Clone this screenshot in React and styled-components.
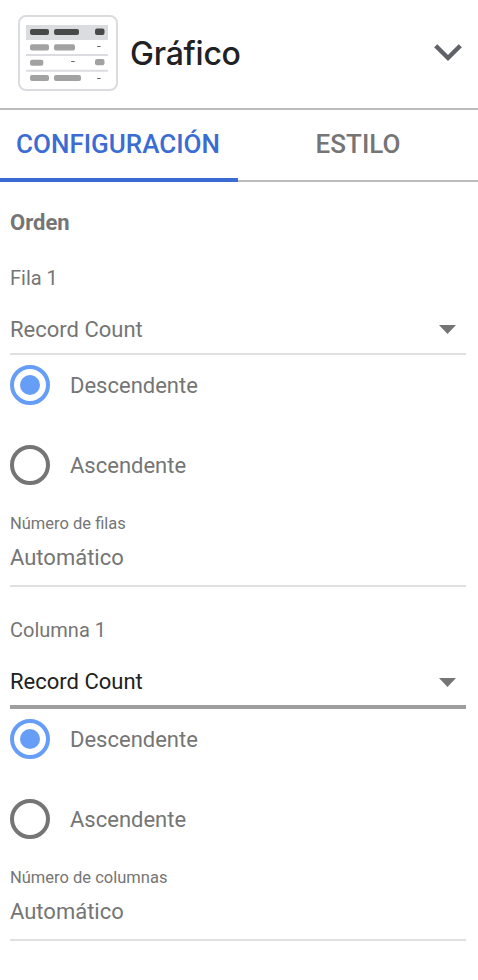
import React from "react";
import styled, { createGlobalStyle } from "styled-components";

const GlobalStyle = createGlobalStyle`
  * { box-sizing: border-box; }
  body { margin: 0; background: #fff; font-family: Roboto, sans-serif; color: #757575; }
`;
const Panel = styled.main`width: 478px; height: 980px; overflow: hidden; background: #fff;`;
const Header = styled.header`
  height: 110px; display: flex; align-items: flex-start; padding: 15px 16px 0 18px;
  border-bottom: 2px solid #bdbdbd;
`;
const Title = styled.h1`
  margin: 18px 0 0 12px; flex: 1; font-family: Inter, sans-serif; font-size: 32px; line-height: 42px;
  font-weight: 500; letter-spacing: -0.25px; color: #202124;
`;
const Chevron = styled.svg`margin-top: 28px; width: 28px; height: 20px;`;
const Tabs = styled.nav`display: flex; height: 72px;`;
const Tab = styled.div`
  flex: 0 0 ${(p) => (p.$active ? 238 : 240)}px; padding-right: ${(p) => (p.$active ? 2 : 0)}px;
  text-align: center; font-size: 26px; line-height: 69px; font-weight: 500;
  color: ${(p) => (p.$active ? "#3b6cd4" : "#757575")};
  border-bottom: ${(p) => (p.$active ? "4px solid #3b6cd4" : "2px solid #bdbdbd")};
`;
const Body = styled.div`padding: 24px 12px 0 10px;`;
const Heading = styled.h2`margin: 0; font-size: 22px; line-height: 34px; font-weight: 700;`;
const Group = styled.section`margin-top: ${(p) => p.$gap}px;`;
const Label = styled.div`font-size: 20px; line-height: 30px;`;
const Select = styled.div`
  display: flex; justify-content: space-between; align-items: center;
  height: ${(p) => (p.$focused ? 64 : 62)}px; padding: 13px 10px 0 0; margin-bottom: 10px;
  font-size: 22px; color: ${(p) => (p.$focused ? "#212121" : "#757575")};
  border-bottom: ${(p) => (p.$focused ? "4px solid #9e9e9e" : "2px solid #e0e0e0")};
`;
const Arrow = styled.svg`width: 17px; height: 9px; margin-top: ${(p) => (p.$focused ? 2 : 0)}px;`;
const Option = styled.div`display: flex; align-items: center; gap: 20px; height: 40px; margin-bottom: 40px; font-size: 22px;`;
const Ring = styled.span`
  width: 40px; height: 40px; border: 4px solid ${(p) => (p.$checked ? "#669df6" : "#757575")}; border-radius: 50%;
  display: grid; place-items: center;
`;
const Dot = styled.span`width: 20px; height: 20px; border-radius: 50%; background: #669df6;`;
const Field = styled.div`margin-top: -13px; height: 75px; border-bottom: 2px solid #e0e0e0;`;
const FieldLabel = styled.div`font-size: 16.5px; line-height: 24px;`;
const FieldValue = styled.div`font-size: 22px; line-height: 32px; margin-top: 6px;`;

const Thumb = () => (
  <svg width="100" height="76" viewBox="0 0 100 76">
    <rect x="1" y="1" width="98" height="74" rx="7" fill="#fff" stroke="#dadce0" strokeWidth="2" />
    <path d="M8 10h82v15H8z" fill="#dadce0" />
    <g fill="#484a4a">
      <rect x="12" y="14" width="19" height="6" rx="2" />
      <rect x="36" y="14" width="25" height="6" rx="2" />
      <rect x="77" y="13.5" width="9.5" height="6.5" rx="2" />
    </g>
    <path d="M8 40h82M8 55.7h82" stroke="#dadce0" strokeWidth="2" />
    <g fill="#a2a2a2">
      <rect x="12" y="29.3" width="19" height="6.2" rx="2" />
      <rect x="36" y="29.3" width="21" height="6.2" rx="2" />
      <rect x="12" y="44.7" width="13.3" height="6" rx="2" />
      <rect x="77" y="44" width="9.5" height="6.2" rx="2" />
      <rect x="12" y="60" width="19" height="6" rx="2" />
      <rect x="36" y="60" width="27" height="6" rx="2" />
    </g>
    <path d="M79.2 31.5h3.4M53.2 46.5h3.4M79.2 63.5h3.4" stroke="#616161" strokeWidth="1" />
  </svg>
);
const Radio = ({ label, checked }) => <Option><Ring $checked={checked}>{checked && <Dot />}</Ring>{label}</Option>;
const SortGroup = ({ label, limit, focused, gap }) => (
  <Group $gap={gap}>
    <Label>{label}</Label>
    <Select $focused={focused}>
      Record Count
      <Arrow $focused={focused} viewBox="0 0 17 9"><path d="M0 0h17L8.5 9z" fill="#757575" /></Arrow>
    </Select>
    <Radio label="Descendente" checked />
    <Radio label="Ascendente" />
    <Field><FieldLabel>{limit}</FieldLabel><FieldValue>Automático</FieldValue></Field>
  </Group>
);
export default function App() {
  return (
    <Panel>
      <GlobalStyle />
      <Header>
        <Thumb />
        <Title>Gráfico</Title>
        <Chevron viewBox="0 0 28 20"><path d="M1.7 2.7L14 15L26.3 2.7" fill="none" stroke="#5f6368" strokeWidth="4.4" /></Chevron>
      </Header>
      <Tabs><Tab $active>CONFIGURACIÓN</Tab><Tab>ESTILO</Tab></Tabs>
      <Body>
        <Heading>Orden</Heading>
        <SortGroup label="Fila 1" limit="Número de filas" gap={23} />
        <SortGroup label="Columna 1" limit="Número de columnas" focused gap={28} />
      </Body>
    </Panel>
  );
}
